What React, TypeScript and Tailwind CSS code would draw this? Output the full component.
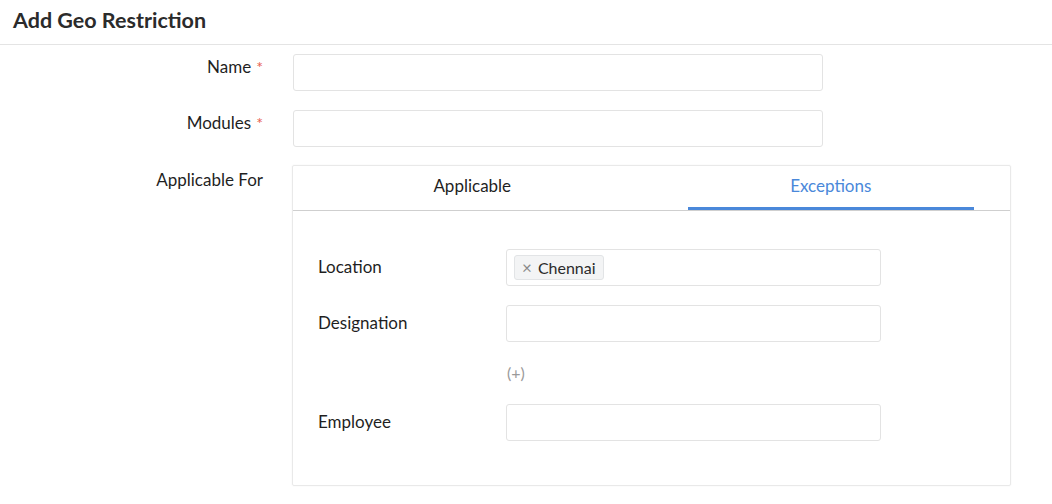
import { useState } from 'react';

const Field = ({ label, required, children }: { label: string; required?: boolean; children: React.ReactNode }) => (
  <div className="flex mb-[19px]">
    <div className="w-[263px] shrink-0 text-right pt-px text-[17px] leading-6 text-[#1f1f1f]">
      {label}
      {required && <span className="ml-[5px] text-[16px] text-[#e8604f]">*</span>}
    </div>
    <div className="ml-[30px]">{children}</div>
  </div>
);

const InnerRow = ({ label, children }: { label?: string; children: React.ReactNode }) => (
  <div className="flex items-center mb-[19px]">
    <div className="w-[188px] shrink-0 text-[17px] leading-6 -mt-[2px] text-[#1f1f1f]">{label}</div>
    {children}
  </div>
);

const Box = ({ children, wide }: { children?: React.ReactNode; wide?: boolean }) => (
  <div
    className={
      'h-[37px] rounded-[3px] border border-[#e3e3e3] bg-white flex items-center px-[7px] ' +
      (wide ? 'w-[530px]' : 'w-[375px]')
    }
  >
    {children}
  </div>
);

const App = () => {
  const [tab, setTab] = useState<'applicable' | 'exceptions'>('exceptions');

  return (
    <div className="min-h-[504px] bg-white font-['Lato','Noto_Sans',sans-serif] text-[#1f1f1f]">
      <div className="h-[45px] border-b border-[#e4e4e4] flex items-center px-[13px]">
        <h1 className="text-[21.5px] font-bold text-[#2b2b2b] -mt-[3px]">Add Geo Restriction</h1>
      </div>

      <div className="pt-[9px]">
        <Field label="Name" required>
          <Box wide />
        </Field>
        <Field label="Modules" required>
          <Box wide />
        </Field>

        <div className="flex -mt-px">
          <div className="w-[263px] shrink-0 text-right pt-[3px] text-[17px] leading-6 text-[#1f1f1f]">Applicable For</div>
          <div className="ml-[29px] w-[719px] h-[321px] border border-[#e9e9e9] rounded-[2px] shadow-[0_0_2px_rgba(0,0,0,0.06)]">
            <div className="flex border-b border-[#cfcfcf] h-[45px]">
              {(['applicable', 'exceptions'] as const).map((t) => (
                <button
                  key={t}
                  onClick={() => setTab(t)}
                  className="flex-1 px-9 h-full cursor-pointer"
                >
                  <div
                    className={
                      'h-full flex items-center justify-center text-[17px] pb-[2px] border-b-[3px] ' +
                      (tab === t ? 'border-[#4a88da] text-[#4a88da]' : 'border-transparent text-[#1f1f1f]')
                    }
                  >
                    {t === 'applicable' ? 'Applicable' : 'Exceptions'}
                  </div>
                </button>
              ))}
            </div>

            <div className="pt-[38px] pl-[25px]">
              <InnerRow label="Location">
                <Box>
                  <span className="flex items-center h-[25px] rounded-[3px] border border-[#e2e4e6] bg-[#f3f4f5] px-[7px] text-[16px] text-[#2b2b2b]">
                    <span className="text-[#8a8a8a] mr-[6px] text-[17px]">×</span>
                    Chennai
                  </span>
                </Box>
              </InnerRow>
              <InnerRow label="Designation">
                <Box />
              </InnerRow>
              <InnerRow>
                <span className="text-[16px] leading-6 text-[#9a9a9a] pl-px">(+)</span>
              </InnerRow>
              <InnerRow label="Employee">
                <Box />
              </InnerRow>
            </div>
          </div>
        </div>
      </div>
    </div>
  );
};

export default App;
